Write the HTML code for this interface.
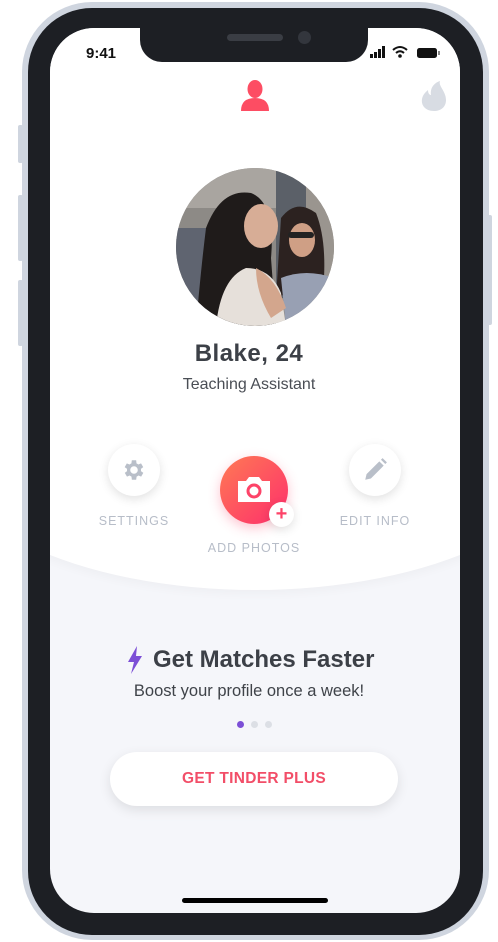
<!DOCTYPE html>
<html><head><meta charset="utf-8"><style>
*{margin:0;padding:0;box-sizing:border-box}
body{width:498px;height:942px;background:#fff;position:relative;overflow:hidden;font-family:"Liberation Sans",sans-serif}
.abs{position:absolute}
.frame{left:22px;top:2px;width:467px;height:938px;border-radius:70px;background:#cfd5df}
.bezel{left:28px;top:8px;width:455px;height:927px;border-radius:64px;background:#1d1f24}
.screen{left:50px;top:28px;width:410px;height:885px;border-radius:44px;background:#f5f6fa;overflow:hidden}
.white{left:-120px;top:-200px;width:650px;height:762px;border-radius:0 0 50% 50% / 0 0 156px 156px;background:#fff;box-shadow:0 4px 10px rgba(0,0,0,0.03)}
.notch{left:140px;top:8px;width:228px;height:54px;background:#1d1f24;border-radius:0 0 22px 22px}
.btn{background:#cfd5df;border-radius:2px}
.c{text-align:center;width:498px;left:0}
.rb{background:#fff;border-radius:50%;box-shadow:0 3px 10px rgba(0,0,0,0.12)}
.lbl{font-size:12.5px;color:#b7bdc8;letter-spacing:1px;text-align:center}
</style></head><body>
<div class="abs btn" style="left:18px;top:125px;width:5px;height:38px"></div>
<div class="abs btn" style="left:18px;top:195px;width:5px;height:66px"></div>
<div class="abs btn" style="left:18px;top:280px;width:5px;height:66px"></div>
<div class="abs btn" style="left:487px;top:215px;width:5px;height:110px"></div>
<div class="abs frame"></div>
<div class="abs bezel"></div>
<div class="abs screen"><div class="abs white"></div></div>
<div class="abs notch"></div>
<div class="abs" style="left:227px;top:34px;width:56px;height:7px;border-radius:4px;background:#3a3d44"></div>
<div class="abs" style="left:298px;top:31px;width:13px;height:13px;border-radius:50%;background:#33363d"></div>
<div class="abs" style="left:86px;top:45px;font-size:15px;font-weight:bold;color:#111">9:41</div>
<svg class="abs" style="left:369px;top:45px" width="75" height="15" viewBox="0 0 75 15">
<rect x="1" y="9" width="3" height="4" fill="#111"/><rect x="5" y="7" width="3" height="6" fill="#111"/><rect x="9" y="4" width="3" height="9" fill="#111"/><rect x="13" y="1" width="3" height="12" fill="#111"/>
<path d="M24 5 Q31 -1 38 5" stroke="#111" stroke-width="2" fill="none"/><path d="M27 8 Q31 4.5 35 8" stroke="#111" stroke-width="2" fill="none"/><circle cx="31" cy="11" r="1.8" fill="#111"/>
<rect x="48" y="3" width="20" height="10" rx="2.5" fill="#111"/><rect x="69" y="6" width="2" height="4" fill="#888"/>
</svg>
<svg class="abs" style="left:240px;top:78px" width="30" height="34" viewBox="0 0 30 34"><ellipse cx="15" cy="11" rx="7.5" ry="9" fill="#fd4d63"/><path d="M1 33 Q1 20 15 20 Q29 20 29 33Z" fill="#fd4d63"/></svg>
<svg class="abs" style="left:420px;top:80px" width="28" height="32" viewBox="0 0 28 32"><path d="M14 31 C5 31 1 25 2 19 C3 14 6 12 8 10 C8 14 10 15 11 15 C10 8 14 3 20 1 C18 6 26 11 26 20 C26 27 21 31 14 31Z" fill="#d8dce3"/></svg>
<svg class="abs" style="left:176px;top:168px" width="158" height="158" viewBox="0 0 158 158">
<defs><clipPath id="cp"><circle cx="79" cy="79" r="79"/></clipPath></defs>
<g clip-path="url(#cp)">
<rect width="158" height="158" fill="#8d8a86"/>
<rect x="0" y="0" width="100" height="40" fill="#a9a5a0"/>
<rect x="100" y="0" width="30" height="130" fill="#5b6068"/>
<rect x="130" y="0" width="30" height="158" fill="#9a958f"/>
<rect x="0" y="60" width="40" height="90" fill="#5f6470"/>
<path d="M30 60 Q45 20 75 25 Q100 35 95 90 L100 158 L20 158 Q25 100 30 60Z" fill="#1f1b1a"/>
<path d="M105 50 Q120 30 140 45 Q150 70 148 110 L100 130 Z" fill="#2c2220"/>
<ellipse cx="85" cy="58" rx="17" ry="22" fill="#d7ad96"/>
<ellipse cx="126" cy="72" rx="13" ry="17" fill="#cf9f85"/>
<rect x="112" y="64" width="26" height="6" rx="3" fill="#222"/>
<path d="M40 158 Q45 110 70 100 Q95 100 105 125 L110 158Z" fill="#e6e0da"/>
<path d="M105 110 Q130 100 158 110 L158 158 L110 158Z" fill="#98a0b3"/>
<path d="M80 100 Q100 110 110 140 L95 150 Q80 125 80 100Z" fill="#d3a68d"/>
</g></svg>
<div class="abs c" style="top:340px;font-size:24px;font-weight:bold;color:#3c4047;letter-spacing:0.5px">Blake, 24</div>
<div class="abs c" style="top:376px;font-size:16px;color:#4a4e55">Teaching Assistant</div>
<div class="abs rb" style="left:108px;top:444px;width:52px;height:52px"></div>
<svg class="abs" style="left:121px;top:457px" width="26" height="26" viewBox="0 0 24 24"><path fill="#b9bfc9" d="M19.4 13a7.5 7.5 0 0 0 0-2l2.1-1.6-2-3.5-2.5 1a7 7 0 0 0-1.7-1L15 3h-4l-.4 2.9a7 7 0 0 0-1.7 1l-2.5-1-2 3.5L6.6 11a7.5 7.5 0 0 0 0 2l-2.1 1.6 2 3.5 2.5-1a7 7 0 0 0 1.7 1L11 21h4l.4-2.9a7 7 0 0 0 1.7-1l2.5 1 2-3.5zM13 15.5a3.5 3.5 0 1 1 0-7 3.5 3.5 0 0 1 0 7z" transform="translate(-1 0)"/></svg>
<div class="abs lbl" style="left:84px;top:514px;width:100px">SETTINGS</div>
<div class="abs rb" style="left:349px;top:444px;width:52px;height:52px"></div>
<svg class="abs" style="left:362px;top:457px" width="26" height="26" viewBox="0 0 24 24"><path fill="#b9bfc9" d="M3 21l1.2-5.2L16 4l4 4L8.2 19.8zM17.5 2.5l1.5-1.5 4 4-1.5 1.5z"/></svg>
<div class="abs lbl" style="left:325px;top:514px;width:100px">EDIT INFO</div>
<div class="abs" style="left:220px;top:456px;width:68px;height:68px;border-radius:50%;background:linear-gradient(135deg,#ff7a54,#fd2e6c);box-shadow:0 4px 12px rgba(253,60,100,0.3)"></div>
<svg class="abs" style="left:235px;top:474px" width="38" height="32" viewBox="0 0 38 32"><path d="M3 7h8l3-4h10l3 4h8v21H3z" fill="#fff"/><circle cx="19" cy="17" r="6" fill="none" stroke="#fd4368" stroke-width="3"/></svg>
<div class="abs rb" style="left:269px;top:502px;width:25px;height:25px;text-align:center;line-height:24px;color:#fd4368;font-size:20px;font-weight:bold">+</div>
<div class="abs lbl" style="left:194px;top:541px;width:120px">ADD PHOTOS</div>
<svg class="abs" style="left:126px;top:646px" width="18" height="28" viewBox="0 0 18 28"><path d="M11 0 L2 16 L8 16 L5 28 L16 10 L10 10 Z" fill="#7c4fd6"/></svg>
<div class="abs" style="left:153px;top:646px;font-size:24px;font-weight:bold;color:#3c4047">Get Matches Faster</div>
<div class="abs c" style="top:682px;font-size:16.5px;color:#3f4349">Boost your profile once a week!</div>
<div class="abs" style="left:237px;top:721px;width:7px;height:7px;border-radius:50%;background:#7c4fd6"></div>
<div class="abs" style="left:251px;top:721px;width:7px;height:7px;border-radius:50%;background:#dcdfe5"></div>
<div class="abs" style="left:265px;top:721px;width:7px;height:7px;border-radius:50%;background:#dcdfe5"></div>
<div class="abs" style="left:110px;top:752px;width:288px;height:54px;border-radius:27px;background:#fff;box-shadow:0 4px 12px rgba(0,0,0,0.1);text-align:center;line-height:54px;font-size:15.5px;font-weight:bold;color:#f24e68;letter-spacing:0.3px">GET TINDER PLUS</div>
<div class="abs" style="left:182px;top:898px;width:146px;height:5px;border-radius:3px;background:#000"></div>
</body></html>
